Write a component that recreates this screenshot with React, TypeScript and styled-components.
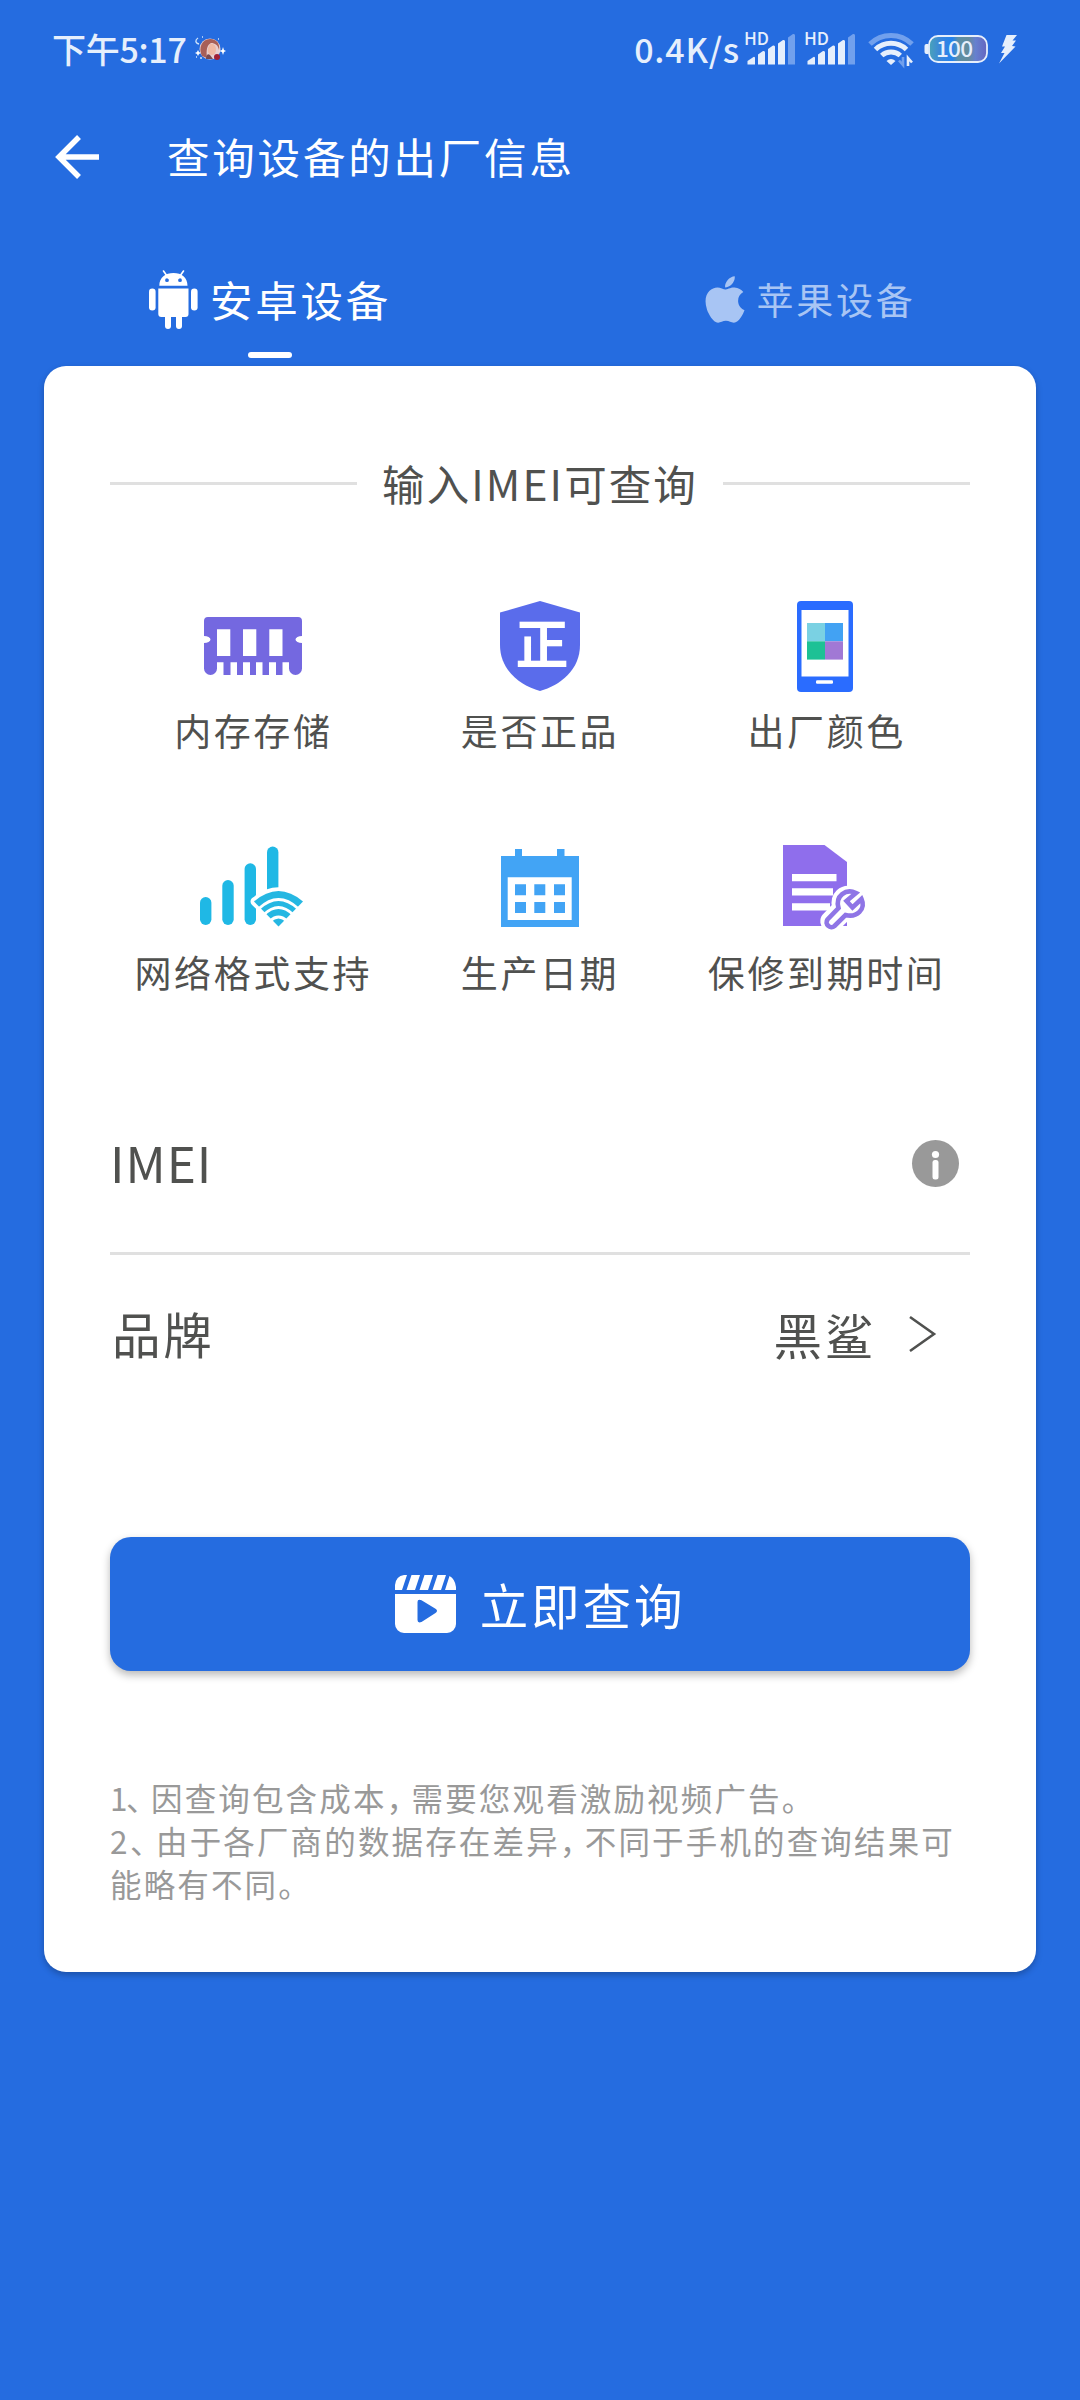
import React from "react";
import styled, { createGlobalStyle } from "styled-components";
import { FaApple } from "react-icons/fa";

const blue = "#256ce0";
const ink = "#50514f";
const rule = "#e0e0e0";

const Global = createGlobalStyle`
  * { box-sizing: border-box; }
  html, body { margin: 0; padding: 0; background: ${blue}; }
  body { font-family: "Noto Sans CJK SC", sans-serif; -webkit-font-smoothing: antialiased; }
  svg { display: block; flex: none; overflow: visible; }
`;

const Screen = styled.div`
  width: 1080px;
  height: 2400px;
  background: ${blue};
  display: flex;
  flex-direction: column;
  overflow: hidden;
`;

const StatusBar = styled.div`
  height: 98px;
  padding: 0 63px 0 52px;
  display: flex;
  align-items: center;
  justify-content: space-between;
  color: #e6effc;
`;

const StatusSide = styled.div`
  display: flex;
  align-items: center;
`;

const StatusText = styled.span<{ $spacing: number }>`
  font-size: 34px;
  line-height: 40px;
  font-weight: 500;
  letter-spacing: ${(p) => p.$spacing}px;
  padding-bottom: 1px;
  white-space: nowrap;
`;

const Slot = styled.div<{ $left: number }>`
  margin-left: ${(p) => p.$left}px;
`;

const TitleBar = styled.header`
  height: 118px;
  padding-left: 55px;
  display: flex;
  align-items: center;
  gap: 68px;
`;

const Title = styled.h1`
  margin: 0;
  padding-bottom: 3px;
  color: #fff;
  font-size: 42.5px;
  line-height: 60px;
  font-weight: 400;
  letter-spacing: 2.8px;
  white-space: nowrap;
`;

const Tabs = styled.nav`
  height: 150px;
  display: flex;
`;

const Tab = styled.div<{ $active?: boolean }>`
  flex: 1;
  display: flex;
  flex-direction: column;
  align-items: center;
  color: ${(p) => (p.$active ? "#fff" : "#a8c5f4")};
  font-size: ${(p) => (p.$active ? 42.5 : 37)}px;
  letter-spacing: 2.7px;
`;

const TabLabel = styled.div`
  height: 136px;
  padding-top: 30px;
  display: flex;
  align-items: center;
  gap: 12px;
  line-height: 60px;
  white-space: nowrap;
`;

const AppleMark = styled(FaApple)`
  width: 40px;
  height: 53px;
`;

const Indicator = styled.div`
  width: 44px;
  height: 6px;
  border-radius: 3px;
  background: #fff;
`;

const Card = styled.main`
  margin: 0 44px;
  height: 1606px;
  padding: 0 66px;
  background: #fff;
  border-radius: 22px;
  box-shadow: 0 3px 6px rgba(0, 0, 0, 0.25);
  display: flex;
  flex-direction: column;
`;

const SectionTitle = styled.div`
  margin-top: 86px;
  height: 62px;
  display: flex;
  align-items: center;
  gap: 25px;
  color: ${ink};
  font-size: 42.5px;
  line-height: 62px;
  letter-spacing: 2.1px;
  white-space: nowrap;

  &::before,
  &::after {
    content: "";
    flex: 1;
    height: 3px;
    background: ${rule};
  }
`;

const Features = styled.section`
  margin-top: 73px;
  display: grid;
  grid-template-columns: repeat(3, 1fr);
  grid-auto-rows: 242px;
`;

const Feature = styled.div`
  display: flex;
  flex-direction: column;
  align-items: center;
`;

const FeatureIcon = styled.div`
  height: 118px;
  display: flex;
  align-items: center;
  justify-content: center;
`;

const FeatureName = styled.div`
  color: ${ink};
  font-size: 37px;
  line-height: 50px;
  letter-spacing: 2.6px;
  white-space: nowrap;
`;

const Field = styled.div<{ $height: number; $line?: boolean; $right: number }>`
  height: ${(p) => p.$height}px;
  padding: ${(p) => (p.$line ? 3 : 0)}px ${(p) => p.$right}px 0 0;
  display: flex;
  align-items: center;
  justify-content: space-between;
  color: ${ink};
  font-size: 48.5px;
  line-height: 68px;
  border-bottom: ${(p) => (p.$line ? `3px solid ${rule}` : "none")};
`;

const FieldName = styled.span<{ $spacing: number; $size?: number; $left?: number }>`
  font-size: ${(p) => p.$size ?? 48.5}px;
  letter-spacing: ${(p) => p.$spacing}px;
  padding-left: ${(p) => p.$left ?? 0}px;
  padding-bottom: 2px;
`;

const FieldValue = styled.span`
  display: flex;
  align-items: center;
  gap: 33px;
  letter-spacing: 2.7px;
`;

const Submit = styled.button`
  margin: 124px 0 0;
  height: 134px;
  padding: 0;
  border: 0;
  border-radius: 21px;
  background: ${blue};
  box-shadow: 0 4px 8px rgba(0, 0, 0, 0.28);
  display: flex;
  align-items: center;
  justify-content: center;
  gap: 24px;
  color: #fff;
  font-family: inherit;
  font-size: 48.5px;
  line-height: 70px;
  letter-spacing: 2.9px;
`;

const Notes = styled.div`
  margin-top: 105px;
  color: #999;
  font-size: 31.5px;
  line-height: 43.2px;
  letter-spacing: 2.15px;
  white-space: nowrap;
`;

const Cell = styled.span<{ $w: number }>`
  display: inline-block;
  width: ${(p) => p.$w}px;
  letter-spacing: 0;
  font-feature-settings: "halt";
`;

const Avatar = () => (
  <svg width="32" height="26" viewBox="0 0 32 26">
    <circle cx="16" cy="13" r="10.5" fill="#e8cfd0" />
    <path d="M8 20C4 12 8 3 16 3c7 0 10 5 9 11-1-5-4-7-8-7-4 2-5 7-4 15z" fill="#a85f58" />
    <path d="M16 8c4-1 6 2 6 6 0 3-2 5-4 5-3 0-5-3-4-7z" fill="#f0b9a4" />
    <path d="M12 23c0-4 2-6 4-4l3 4z" fill="#7a4a50" />
    <circle cx="23" cy="21" r="3" fill="#a32036" />
    <path d="M29 11l1 3 2 1-2 1-1 3-1-3-3-1 3-1zM4 14l1 2 2 1-2 1-1 2-1-2-2-1 2-1z" fill="#fff" />
    <path d="M4 2c-3 2-3 5 1 6M8 1h1M2 21h1M6 22h2M24 3h1" stroke="#cfe3fb" strokeWidth="1.3" fill="none" />
  </svg>
);

const Signal = () => (
  <svg width="51" height="34" viewBox="0 0 51 34">
    <text x="-1" y="12.5" fontSize="17.500" fontWeight="500" fill="#e6effc" textLength="25" lengthAdjust="spacingAndGlyphs">
      HD
    </text>
    <g fill="#e6effc">
      <path d="M2.5 29l6-4a1 1 0 0 1 1.500 1v6.500h-7.500z" />
      <path d="M13 22.500l5-3.500a1.500 1.500 0 0 1 2 1.500v12h-7z" />
      <path d="M23 17l5-3.500a1.500 1.500 0 0 1 2 1.500v17.500h-7z" />
      <path d="M33 11.500l5-3.500a1.500 1.500 0 0 1 2 1.500v23h-7z" />
    </g>
    <path d="M43 5.500l5-3.500a1.500 1.500 0 0 1 2 1.500v29h-7z" fill="#71a0ed" />
  </svg>
);

const Wifi = () => (
  <svg width="47" height="36" viewBox="0 0 47 36" fill="none" strokeWidth="5">
    <path d="M2 13a30 30 0 0 1 42 0" stroke="#71a0ed" />
    <path d="M7.500 18.500a22.500 22.500 0 0 1 31 0" stroke="#e6effc" />
    <path d="M13.700 24.500a14 14 0 0 1 18.600 0" stroke="#e6effc" />
    <path d="M18.500 30q4.500-4 9 0l-4.500 4z" fill="#e6effc" stroke="none" />
    <path d="M35 26v8l-4-4.500" stroke="#71a0ed" strokeWidth="2.600" />
    <path d="M40 35v-8l4 4.500" stroke="#e6effc" strokeWidth="2.600" />
  </svg>
);

const Battery = () => (
  <svg width="64" height="28" viewBox="0 0 64 28">
    <defs>
      <linearGradient id="charge">
        <stop offset="0" stopColor="#4aa3b8" />
        <stop offset=".2" stopColor="#3a86dc" />
        <stop offset=".4" stopColor="#2382ee" />
        <stop offset=".5" stopColor="#5b8fa8" />
        <stop offset=".68" stopColor="#648c9c" />
        <stop offset=".8" stopColor="#6680cf" />
        <stop offset="1" stopColor="#6465c0" />
      </linearGradient>
    </defs>
    <path d="M4.500 9H2a2 2 0 0 0-1.500 2v6A2 2 0 0 0 2 19h2.500z" fill="#e6effc" />
    <rect x="5" y="1" width="58" height="26" rx="9" fill="url(#charge)" stroke="#e6effc" strokeWidth="1.800" />
    <text x="12" y="22" fontSize="22.500" fontWeight="500" fill="#e6effc" textLength="37">
      100
    </text>
  </svg>
);

const Bolt = () => (
  <svg width="18" height="29" viewBox="0 0 18 29">
    <path d="M7.500 0H18l-4.500 5.500H17l-4 5.500 3.500.5L0 28.500l5.500-10.500H2l4-6.500H3z" fill="#e6effc" />
  </svg>
);

const BackArrow = () => (
  <svg width="44" height="44" viewBox="0 0 44 44" fill="none" stroke="#fff" strokeWidth="5.500">
    <path d="M44 22H5M24 2L4 22l20 20" />
  </svg>
);

const Android = () => (
  <svg width="49" height="59" viewBox="0 0 49 59" fill="#fff">
    <path d="M14.500 1l5 7M34.500 1l-5 7" stroke="#fff" strokeWidth="1.600" strokeLinecap="round" />
    <path
      fillRule="evenodd"
      d="M10.300 15.700C10.300 7.500 16.500 3 24.500 3s14 4.500 14 12.700zM18 8.300a1.900 1.900 0 1 0 0 3.800 1.900 1.900 0 0 0 0-3.800zM31 8.300a1.900 1.900 0 1 0 0 3.800 1.900 1.900 0 0 0 0-3.800z"
    />
    <path d="M9.300 18.500h30.200V44a3 3 0 0 1-3 3H12.300a3 3 0 0 1-3-3z" />
    <rect x="0" y="18.500" width="6.600" height="22" rx="3.300" />
    <rect x="42" y="18.500" width="6.600" height="22" rx="3.300" />
    <rect x="16" y="42" width="6" height="17" rx="3" />
    <rect x="27" y="42" width="6" height="17" rx="3" />
  </svg>
);

const Memory = () => (
  <svg width="98" height="58" viewBox="0 0 98 58">
    <path
      fill="#7468e0"
      fillRule="evenodd"
      d="M4 0h90a4 4 0 0 1 4 4v15a6.500 3.500 0 0 0 0 7v25.500a6.500 6.500 0 0 1-13 0V45.300h-6.500V58H72V45.300h-7V58h-6.500V45.300H52V58h-6V45.300h-7V58h-6V45.300h-6.500V58h-7V45.300H13v6.200a6.500 6.500 0 0 1-13 0V26a6.500 3.500 0 0 0 0-7V4a4 4 0 0 1 4-4zM13 12.300V39h13.300V12.300zM39 12.300V39h13.300V12.300zM65.300 12.300V39h13.200V12.300z"
    />
  </svg>
);

const Shield = () => (
  <svg width="80" height="90" viewBox="0 0 80 90">
    <path d="M40 0l40 11.500V44c0 25-20 40.500-40 46C20 84.500 0 69 0 44V11.500z" fill="#5a6ceb" />
    <text x="42" y="62.500" fontSize="53" fontWeight="700" fill="#fff" textAnchor="middle">
      正
    </text>
  </svg>
);

const Phone = () => (
  <svg width="59" height="91" viewBox="0 0 59 91">
    <rect width="56" height="91" rx="4" fill="#2a6cff" />
    <path d="M4.500 9h47v66.500h-47z" fill="#fff" />
    <path d="M10 22h18v18.300H10z" fill="#7ad1e3" />
    <path d="M28 22h18v18.300H28z" fill="#42a2f3" />
    <path d="M10 40.300h18v18.300H10z" fill="#1dc195" />
    <path d="M28 40.300h18v18.300H28z" fill="#a178d5" />
    <rect x="19" y="79.300" width="17" height="3.400" rx="1.200" fill="#fff" />
  </svg>
);

const Network = () => (
  <svg width="107" height="84" viewBox="0 0 107 84">
    <g fill="#1fb8e5">
      <rect x="0" y="51" width="11.400" height="28" rx="5.700" />
      <rect x="22.300" y="34" width="11.400" height="45" rx="5.700" />
      <rect x="44.600" y="17.300" width="11.400" height="61.700" rx="5.700" />
      <rect x="67" y="0.500" width="11.400" height="61" rx="5.700" />
    </g>
    <path d="M55 55.500Q78.500 36.500 102 55.500L78.500 79z" fill="#fff" stroke="#fff" strokeWidth="9" strokeLinejoin="round" />
    <path d="M54 55.500Q78.500 34.500 103 55.500L78.500 80.500z" fill="#25b7e2" />
    <g fill="none" stroke="#fff" strokeWidth="3">
      <path d="M59 62.500q19.500-18 39 0" />
      <path d="M64 68.500q14.500-14 29 0" />
      <path d="M70 75q8.500-8 17 0" />
    </g>
  </svg>
);

const Calendar = () => (
  <svg width="78" height="78" viewBox="0 0 78 78" fill="#42a4f5">
    <path d="M0 7h14V0h7v7h35V0h7.500v7H78v71H0z" />
    <path d="M6.700 28.300h64V71h-64z" fill="#fff" />
    <path d="M14 35.300h11v11H14zM33.300 35.300h11v11h-11zM53 35.300h11v11H53zM14 53h11v11H14zM33.300 53h11v11h-11zM53 53h11v11H53z" />
  </svg>
);

const Warranty = () => (
  <svg width="88" height="86" viewBox="0 0 88 86">
    <path d="M0 0h41.500L64 17v64H0z" fill="#8f6eec" />
    <path d="M9 29h44.500v7.300H9zM9 43.300h41v7.300H9zM9 58.300h38v7.300H9z" fill="#fff" />
    <path
      d="M70 47C60 44 52 51 54.500 62L44 73c-4 5 3 12 8 8l10.500-10.500C73 73 82 66 79 56L71.500 63l-8-8z"
      fill="#fff"
      stroke="#fff"
      strokeWidth="11"
      strokeLinejoin="round"
    />
    <path
      d="M73 48C63 43 52 51 55.500 63L44.500 74.500c-3.500 4.500 3 10 7 6.500L62.500 70C74 73 83 64 78.500 54L69.500 62.500l-6-6.500z"
      fill="#fff"
      stroke="#8f75e6"
      strokeWidth="4.600"
      strokeLinejoin="miter"
    />
  </svg>
);

const Info = () => (
  <svg width="47" height="47" viewBox="0 0 47 47">
    <circle cx="23.500" cy="23.500" r="23.500" fill="#999" />
    <circle cx="23.500" cy="14.500" r="3.600" fill="#fff" />
    <rect x="20.500" y="20" width="6" height="19.500" rx="2.500" fill="#fff" />
  </svg>
);

const Chevron = () => (
  <svg width="27" height="36" viewBox="0 0 27 36" fill="none" stroke={ink} strokeWidth="2.600">
    <path d="M1 1l24 17L1 35" />
  </svg>
);

const Clapper = () => (
  <svg width="61" height="58" viewBox="0 0 61 58">
    <path
      fill="#fff"
      d="M9 0h3L7 15H0V10Q1 1 9 0zM16.500 0H25l-5 15h-8.500zM29.500 0H38l-5 15h-8.500zM42.500 0H51l-5 15h-8.500zM54.500 1Q60 4 61 12v3H50z"
    />
    <path
      fill="#fff"
      fillRule="evenodd"
      d="M0 19h61v30a9 9 0 0 1-9 9H9a9 9 0 0 1-9-9zM22.500 27v18q0 3.500 4 2l14-9q3-2.200 0-4.300l-14-8.500q-4-1.500-4 1.800z"
    />
  </svg>
);

const features = [
  { name: "内存存储", icon: <Memory /> },
  { name: "是否正品", icon: <Shield /> },
  { name: "出厂颜色", icon: <Phone /> },
  { name: "网络格式支持", icon: <Network /> },
  { name: "生产日期", icon: <Calendar /> },
  { name: "保修到期时间", icon: <Warranty /> },
];

export default function App() {
  return (
    <Screen>
      <Global />
      <StatusBar>
        <StatusSide>
          <StatusText $spacing={-0.3}>下午5:17</StatusText>
          <Slot $left={8}>
            <Avatar />
          </Slot>
        </StatusSide>
        <StatusSide>
          <StatusText $spacing={0.8}>0.4K/s</StatusText>
          <Slot $left={5}>
            <Signal />
          </Slot>
          <Slot $left={9}>
            <Signal />
          </Slot>
          <Slot $left={12}>
            <Wifi />
          </Slot>
          <Slot $left={9}>
            <Battery />
          </Slot>
          <Slot $left={11}>
            <Bolt />
          </Slot>
        </StatusSide>
      </StatusBar>

      <TitleBar>
        <BackArrow />
        <Title>查询设备的出厂信息</Title>
      </TitleBar>

      <Tabs>
        <Tab $active>
          <TabLabel>
            <Android />
            安卓设备
          </TabLabel>
          <Indicator />
        </Tab>
        <Tab>
          <TabLabel>
            <AppleMark />
            苹果设备
          </TabLabel>
        </Tab>
      </Tabs>

      <Card>
        <SectionTitle>输入IMEI可查询</SectionTitle>

        <Features>
          {features.map((f) => (
            <Feature key={f.name}>
              <FeatureIcon>{f.icon}</FeatureIcon>
              <FeatureName>{f.name}</FeatureName>
            </Feature>
          ))}
        </Features>

        <Field $height={184} $line $right={11}>
          <FieldName $spacing={1} $size={49.5} $left={-1}>
            IMEI
          </FieldName>
          <Info />
        </Field>
        <Field $height={158} $right={34}>
          <FieldName $spacing={2.7} $left={2}>
            品牌
          </FieldName>
          <FieldValue>
            黑鲨
            <Chevron />
          </FieldValue>
        </Field>

        <Submit>
          <Clapper />
          立即查询
        </Submit>

        <Notes>
          <div>
            <Cell $w={16}>1</Cell>
            <Cell $w={25}>、</Cell>因查询包含成本<Cell $w={25}>，</Cell>需要您观看激励视频广告。
          </div>
          <div>
            <Cell $w={20}>2</Cell>
            <Cell $w={26}>、</Cell>由于各厂商的数据存在差异<Cell $w={25}>，</Cell>不同于手机的查询结果可
          </div>
          <div>能略有不同。</div>
        </Notes>
      </Card>
    </Screen>
  );
}
